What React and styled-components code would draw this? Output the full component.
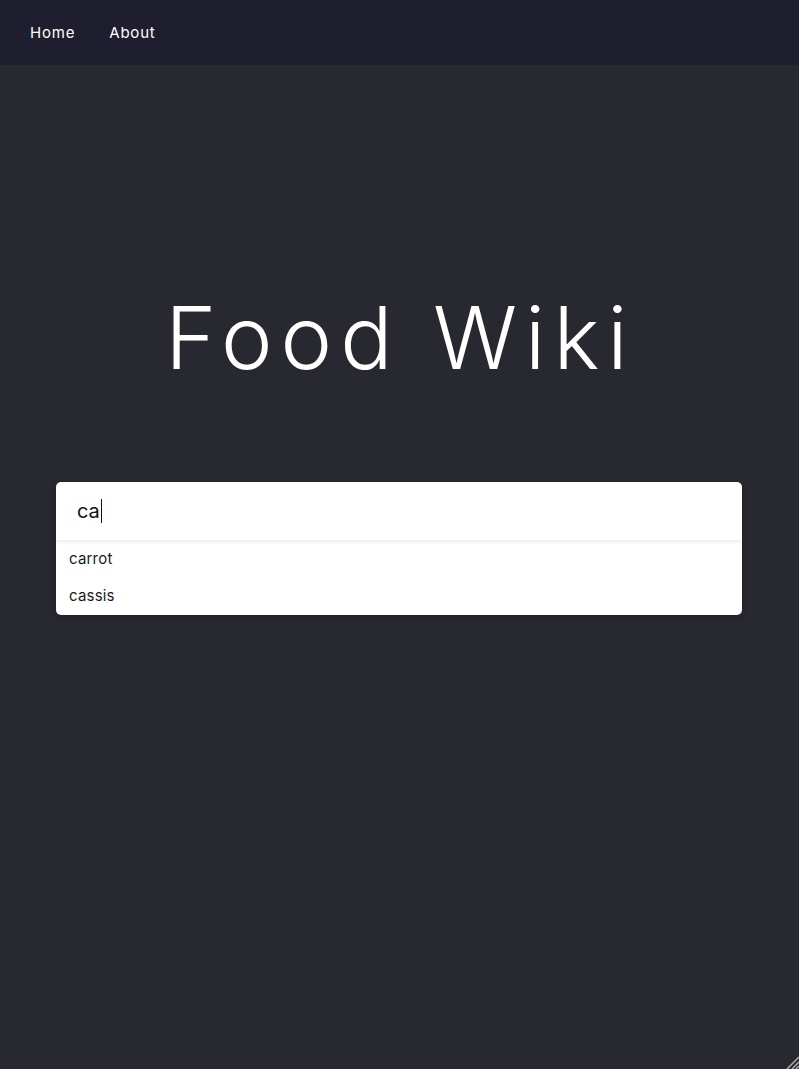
import React from "react";
import styled, { createGlobalStyle } from "styled-components";

const GlobalStyle = createGlobalStyle`
  html, body {
    margin: 0;
    padding: 0;
    background: #282830;
  }
  body {
    font-family: Inter, "Noto Sans", "DejaVu Sans", sans-serif;
  }
`

const Page = styled.div`
  position: relative;
  min-height: 1069px;
  background: #282830;
  display: flex;
  flex-direction: column;
`
const NavBar = styled.nav`
  height: 65px;
  background: #1e1e2e;
  display: flex;
  align-items: center;
  padding: 0 30px;
  gap: 34px;
  box-sizing: border-box;
`
const NavLink = styled.a`
  color: #ffffff;
  font-size: 15px;
  font-weight: 400;
  text-decoration: none;
  letter-spacing: 0.8px;
`
const Main = styled.main`
  display: flex;
  flex-direction: column;
  align-items: center;
  padding: 0 57px 0 56px;
`
const Title = styled.h1`
  margin: 198px 0 0;
  height: 150px;
  line-height: 150px;
  color: #ffffff;
  font-size: 87px;
  font-weight: 300;
  letter-spacing: 8px;
  text-indent: 3px;
`
const Search = styled.div`
  margin-top: 69px;
  width: 100%;
  background: #ffffff;
  border-radius: 5px;
  box-shadow: 0 2px 6px rgba(0, 0, 0, 0.25);
  overflow: hidden;
`
const InputRow = styled.div`
  height: 58px;
  display: flex;
  align-items: center;
  padding: 0 21px;
  font-size: 20px;
  color: #111111;
  box-shadow: 0 2px 4px rgba(0, 0, 0, 0.08);
  position: relative;
`
const Caret = styled.span`
  display: inline-block;
  width: 1px;
  height: 24px;
  margin-left: 1px;
  background: #111111;
`
const Options = styled.ul`
  list-style: none;
  margin: 0;
  padding: 0 0 1px;
`
const Option = styled.li`
  height: 37px;
  line-height: 37px;
  padding: 0 13px;
  font-size: 15px;
  color: #1a1a1a;
  letter-spacing: 0.2px;
`
const Grip = styled.svg`
  position: absolute;
  right: 0;
  bottom: 0;
`

export default function App() {
  return (
    <>
      <GlobalStyle />
      <Page>
        <NavBar>
          <NavLink href="#">Home</NavLink>
          <NavLink href="#">About</NavLink>
        </NavBar>
        <Main>
          <Title>Food Wiki</Title>
          <Search>
            <InputRow>
              ca<Caret />
            </InputRow>
            <Options>
              <Option>carrot</Option>
              <Option>cassis</Option>
            </Options>
          </Search>
        </Main>
        <Grip width="14" height="14" viewBox="0 0 14 14">
          <path d="M14 2 L2 14 M14 7 L7 14 M14 11 L11 14" stroke="#b0b0b0" strokeWidth="1.5" />
        </Grip>
      </Page>
    </>
  );
}
